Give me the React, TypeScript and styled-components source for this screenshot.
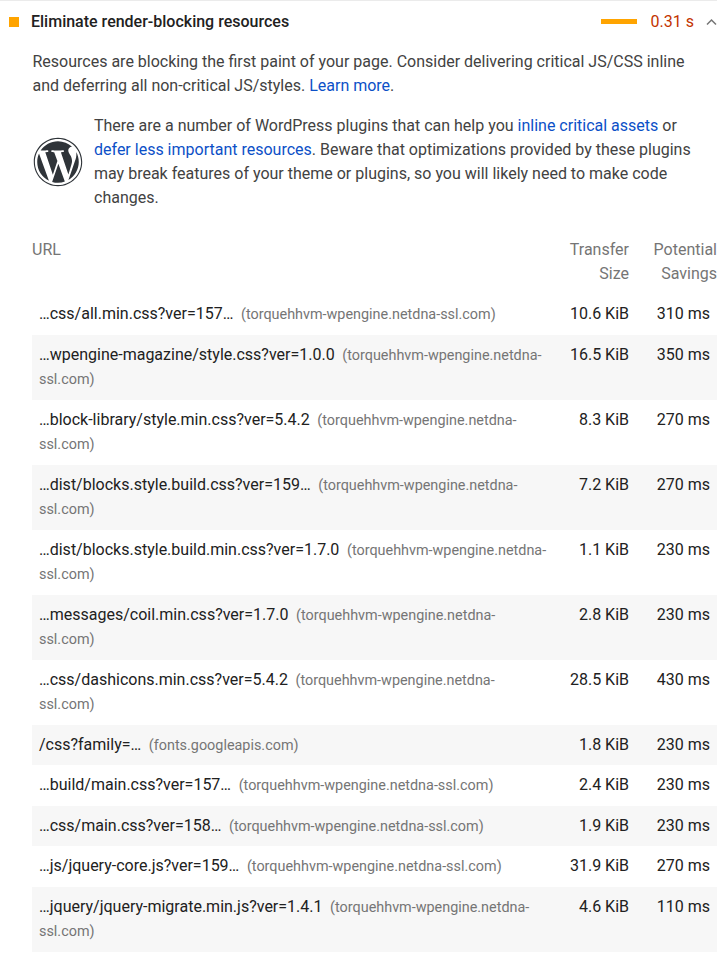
import React from "react";
import styled, { createGlobalStyle } from "styled-components";
import { FaWordpress } from "react-icons/fa";

const Global = createGlobalStyle`
  html, body { margin: 0; padding: 0; background: #fff; }
  body { font-family: Roboto, "Liberation Sans", sans-serif; font-size: 16px; line-height: 24px; color: #212121; }
`;

const Audit = styled.section`
  width: 717px;
  border-top: 1px solid #ebebeb;
`;

const Header = styled.div`
  display: flex;
  align-items: center;
  height: 41px;
  padding-left: 9px;
`;

const Square = styled.span`
  width: 10px;
  height: 10px;
  background: #ffa400;
  margin-right: 12px;
`;

const Title = styled.span`
  flex: 1;
  font-weight: 500;
`;

const Bar = styled.span`
  width: 36px;
  height: 5px;
  background: #ffa400;
  margin-right: 14px;
`;

const Value = styled.span`
  color: #c33300;
  margin-right: 12px;
`;

const Chevron = styled.svg`
  width: 11px;
  height: 8px;
  fill: none;
  stroke: #757575;
  stroke-width: 1.5;
`;

const Body = styled.div`
  padding: 8px 0 0 32px;
`;

const Paragraph = styled.p`
  margin: 0;
  padding-right: 16px;
  color: #424242;
`;

const Description = styled(Paragraph)`
  margin-left: 0.5px;
`;

const Link = styled.a`
  color: #0c50c7;
  text-decoration: none;
`;

const Note = styled.div`
  display: flex;
  align-items: center;
  margin-top: 16px;
  gap: 11px;
`;

const Logo = styled(FaWordpress)`
  flex: none;
  width: 50px;
  height: 50px;
  margin-left: 1px;
  color: #2f3439;
`;

const Table = styled.table`
  width: 685px;
  margin-top: 20px;
  border-collapse: collapse;
  table-layout: fixed;
`;

const HeadCell = styled.th<{ $right?: boolean; $end?: boolean }>`
  font-weight: 400;
  color: #757575;
  vertical-align: top;
  text-align: ${p => (p.$right ? "right" : "left")};
  padding: 8px ${p => (p.$end ? "0" : "7px")} 8px 0;
`;

const Row = styled.tr`
  &:nth-child(even) { background: #f7f7f7; }
`;

const UrlCell = styled.td`
  padding: 8px 3px 8px 7px;
  line-height: 24.5px;
  vertical-align: top;
`;

const NumCell = styled.td`
  padding: 8px 7px 8px 0;
  line-height: 24.5px;
  text-align: right;
  vertical-align: top;
  white-space: nowrap;
`;

const Host = styled.span`
  margin-left: 7.6px;
  font-size: 14.4px;
  line-height: 20px;
  color: #757575;
`;

const rows: [string, string, string, string][] = [
  ["…css/all.min.css?ver=157…", "torquehhvm-wpengine.netdna-ssl.com", "10.6 KiB", "310 ms"],
  ["…wpengine-magazine/style.css?ver=1.0.0", "torquehhvm-wpengine.netdna-ssl.com", "16.5 KiB", "350 ms"],
  ["…block-library/style.min.css?ver=5.4.2", "torquehhvm-wpengine.netdna-ssl.com", "8.3 KiB", "270 ms"],
  ["…dist/blocks.style.build.css?ver=159…", "torquehhvm-wpengine.netdna-ssl.com", "7.2 KiB", "270 ms"],
  ["…dist/blocks.style.build.min.css?ver=1.7.0", "torquehhvm-wpengine.netdna-ssl.com", "1.1 KiB", "230 ms"],
  ["…messages/coil.min.css?ver=1.7.0", "torquehhvm-wpengine.netdna-ssl.com", "2.8 KiB", "230 ms"],
  ["…css/dashicons.min.css?ver=5.4.2", "torquehhvm-wpengine.netdna-ssl.com", "28.5 KiB", "430 ms"],
  ["/css?family=…", "fonts.googleapis.com", "1.8 KiB", "230 ms"],
  ["…build/main.css?ver=157…", "torquehhvm-wpengine.netdna-ssl.com", "2.4 KiB", "230 ms"],
  ["…css/main.css?ver=158…", "torquehhvm-wpengine.netdna-ssl.com", "1.9 KiB", "230 ms"],
  ["…js/jquery-core.js?ver=159…", "torquehhvm-wpengine.netdna-ssl.com", "31.9 KiB", "270 ms"],
  ["…jquery/jquery-migrate.min.js?ver=1.4.1", "torquehhvm-wpengine.netdna-ssl.com", "4.6 KiB", "110 ms"],
];

export default function App() {
  return (
    <>
      <Global />
      <Audit>
        <Header>
          <Square />
          <Title>Eliminate render-blocking resources</Title>
          <Bar />
          <Value>0.31 s</Value>
          <Chevron viewBox="0 0 11 8"><path d="M1 6.5 5.5 2 10 6.5" /></Chevron>
        </Header>
        <Body>
          <Description>
            Resources are blocking the first paint of your page. Consider delivering critical JS/CSS inline and deferring all non-critical JS/styles. <Link href="#">Learn more</Link>.
          </Description>
          <Note>
            <Logo />
            <Paragraph>
              There are a number of WordPress plugins that can help you <Link href="#">inline critical assets</Link> or <Link href="#">defer less important resources</Link>. Beware that optimizations provided by these plugins may break features of your theme or plugins, so you will likely need to make code changes.
            </Paragraph>
          </Note>
          <Table>
            <colgroup>
              <col style={{ width: 520 }} />
              <col style={{ width: 84 }} />
              <col style={{ width: 81 }} />
            </colgroup>
            <thead>
              <tr>
                <HeadCell>URL</HeadCell>
                <HeadCell $right>Transfer Size</HeadCell>
                <HeadCell $right $end>Potential Savings</HeadCell>
              </tr>
            </thead>
            <tbody>
              {rows.map(([url, host, size, ms]) => (
                <Row key={url}>
                  <UrlCell>{url}<Host>({host})</Host></UrlCell>
                  <NumCell>{size}</NumCell>
                  <NumCell>{ms}</NumCell>
                </Row>
              ))}
            </tbody>
          </Table>
        </Body>
      </Audit>
    </>
  );
}
